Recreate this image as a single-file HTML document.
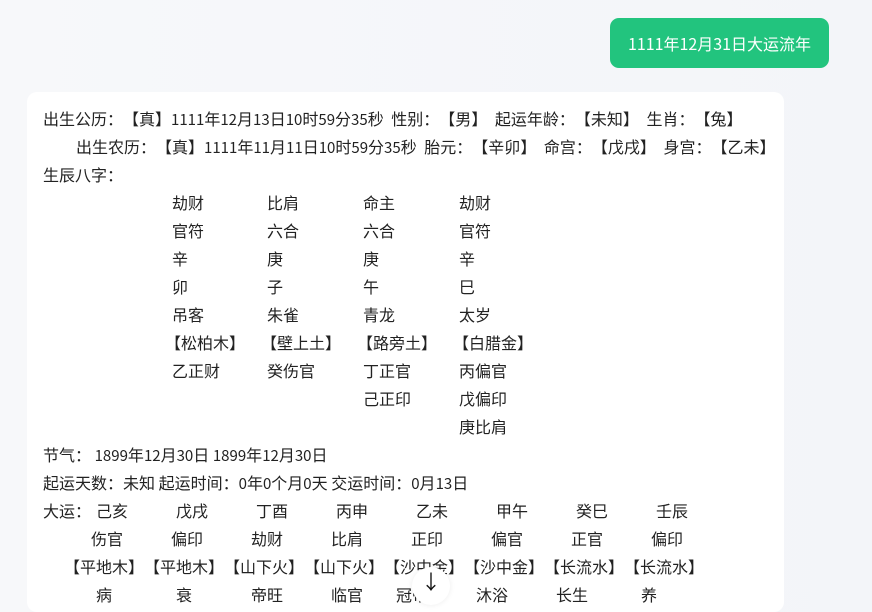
<html lang="zh-CN"><head><style>
body{margin:0;width:872px;height:591px;overflow:hidden;background:linear-gradient(90deg,#f7f8fa,#f3f5f9);font-family:"Noto Sans CJK SC",sans-serif;font-size:16px;color:#222;position:relative}
.btn{position:absolute;left:610px;top:18px;width:219px;height:50px;background:#22c47e;border-radius:9px;color:#fff;font-size:16px;line-height:50px;text-align:center}
.card{position:absolute;left:27px;top:92px;width:757px;height:520px;background:#fff;border-radius:10px}
.t{position:absolute;white-space:pre;line-height:20px}
.w{word-spacing:4px}
.m{line-height:28px}
i{font-style:normal;display:inline-block;width:1em}
i.l{text-align:right}
b{font-weight:normal;font-size:15px}
.arrow{position:absolute;left:412px;top:567px;width:38px;height:38px;border-radius:50%;background:#fff;box-shadow:0 0 6px rgba(0,0,0,.08);text-align:center;font-size:20px;line-height:28px;color:#111}
</style></head><body>
<div class="btn">1111年12月31日大运流年</div>
<div class="card"></div>
<div class="t w" style="left:43px;top:108px">出生公历<i>：</i><i class="l">【</i>真<i>】</i><b>1111</b>年<b>12</b>月<b>13</b>日<b>10</b>时<b>59</b>分<b>35</b>秒 性别<i>：</i><i class="l">【</i>男<i>】</i> 起运年龄<i>：</i><i class="l">【</i>未知<i>】</i> 生肖<i>：</i><i class="l">【</i>兔<i>】</i></div>
<div class="t w" style="left:76px;top:136px">出生农历<i>：</i><i class="l">【</i>真<i>】</i><b>1111</b>年<b>11</b>月<b>11</b>日<b>10</b>时<b>59</b>分<b>35</b>秒 胎元<i>：</i><i class="l">【</i>辛卯<i>】</i> 命宫<i>：</i><i class="l">【</i>戊戌<i>】</i> 身宫<i>：</i><i class="l">【</i>乙未<i>】</i></div>
<div class="t" style="left:43px;top:164px">生辰八字<i>：</i></div>
<div class="t m" style="left:172px;top:188px">劫财
官符
辛
卯
吊客</div>
<div class="t m" style="left:267px;top:188px">比肩
六合
庚
子
朱雀</div>
<div class="t m" style="left:363px;top:188px">命主
六合
庚
午
青龙</div>
<div class="t m" style="left:459px;top:188px">劫财
官符
辛
巳
太岁</div>
<div class="t" style="left:165px;top:332px"><i class="l">【</i>松柏木<i>】</i></div>
<div class="t" style="left:261px;top:332px"><i class="l">【</i>壁上土<i>】</i></div>
<div class="t" style="left:357px;top:332px"><i class="l">【</i>路旁土<i>】</i></div>
<div class="t" style="left:453px;top:332px"><i class="l">【</i>白腊金<i>】</i></div>
<div class="t" style="left:172px;top:360px">乙正财</div>
<div class="t" style="left:267px;top:360px">癸伤官</div>
<div class="t m" style="left:363px;top:356px">丁正官
己正印</div>
<div class="t m" style="left:459px;top:356px">丙偏官
戊偏印
庚比肩</div>
<div class="t" style="left:43px;top:444px">节气<i>：</i> <b>1899</b>年<b>12</b>月<b>30</b>日 <b>1899</b>年<b>12</b>月<b>30</b>日</div>
<div class="t" style="left:43px;top:472px">起运天数<i>：</i>未知 起运时间<i>：</i><b>0</b>年<b>0</b>个月<b>0</b>天 交运时间<i>：</i><b>0</b>月<b>13</b>日</div>
<div class="t" style="left:43px;top:500px">大运<i>：</i></div>
<div class="t" style="left:96px;top:500px">己亥</div><div class="t" style="left:176px;top:500px">戊戌</div><div class="t" style="left:256px;top:500px">丁酉</div><div class="t" style="left:336px;top:500px">丙申</div><div class="t" style="left:416px;top:500px">乙未</div><div class="t" style="left:496px;top:500px">甲午</div><div class="t" style="left:576px;top:500px">癸巳</div><div class="t" style="left:656px;top:500px">壬辰</div>
<div class="t" style="left:91px;top:528px">伤官</div><div class="t" style="left:171px;top:528px">偏印</div><div class="t" style="left:251px;top:528px">劫财</div><div class="t" style="left:331px;top:528px">比肩</div><div class="t" style="left:411px;top:528px">正印</div><div class="t" style="left:491px;top:528px">偏官</div><div class="t" style="left:571px;top:528px">正官</div><div class="t" style="left:651px;top:528px">偏印</div>
<div class="t" style="left:64px;top:556px"><i class="l">【</i>平地木<i>】</i></div><div class="t" style="left:144px;top:556px"><i class="l">【</i>平地木<i>】</i></div><div class="t" style="left:224px;top:556px"><i class="l">【</i>山下火<i>】</i></div><div class="t" style="left:304px;top:556px"><i class="l">【</i>山下火<i>】</i></div><div class="t" style="left:384px;top:556px"><i class="l">【</i>沙中金<i>】</i></div><div class="t" style="left:464px;top:556px"><i class="l">【</i>沙中金<i>】</i></div><div class="t" style="left:544px;top:556px"><i class="l">【</i>长流水<i>】</i></div><div class="t" style="left:624px;top:556px"><i class="l">【</i>长流水<i>】</i></div>
<div class="t" style="left:96px;top:584px">病</div><div class="t" style="left:176px;top:584px">衰</div><div class="t" style="left:251px;top:584px">帝旺</div><div class="t" style="left:331px;top:584px">临官</div><div class="t" style="left:396px;top:584px">冠带</div><div class="t" style="left:476px;top:584px">沐浴</div><div class="t" style="left:556px;top:584px">长生</div><div class="t" style="left:641px;top:584px">养</div>
<div class="arrow">↓</div>
</body></html>
